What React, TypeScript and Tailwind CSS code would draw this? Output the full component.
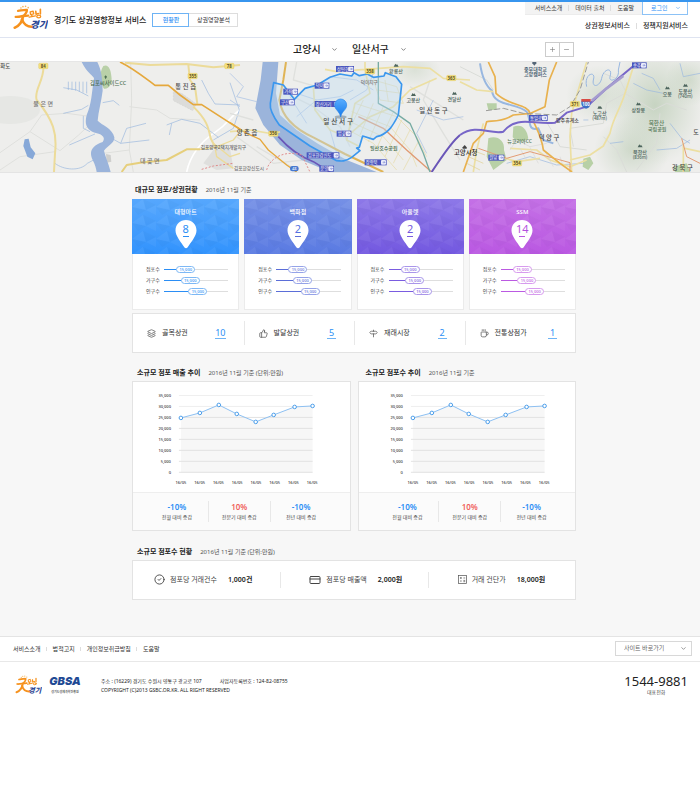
import type { ReactNode } from "react";
import { ChevronDown, CircleCheck, Coffee, CreditCard, Layers, Minus, Plus, Signpost, ThumbsUp } from "lucide-react";

const FONT = "font-['Noto_Sans','Noto_Sans_CJK_KR',sans-serif]";

type StoreTone = {
  name: string;
  count: number;
  head: string;
  num: string;
  line: string;
  pill: string;
};

const STORES: StoreTone[] = [
  { name: "대형마트", count: 8, head: "from-[#56a7fd] to-[#3193fd]", num: "text-[#2b8ef5]", line: "bg-[#2b8ef5]", pill: "border-[#7db8f5] text-[#2b8ef5]" },
  { name: "백화점", count: 2, head: "from-[#7590e6] to-[#5a7ae2]", num: "text-[#5472e0]", line: "bg-[#5b6ed8]", pill: "border-[#95a3e8] text-[#5b6ed8]" },
  { name: "아울렛", count: 2, head: "from-[#8d78e8] to-[#7358e0]", num: "text-[#7256dd]", line: "bg-[#7a5ce0]", pill: "border-[#a996ea] text-[#7a5ce0]" },
  { name: "SSM", count: 14, head: "from-[#c470e6] to-[#ba58e2]", num: "text-[#b352de]", line: "bg-[#bb5ae2]", pill: "border-[#d79bee] text-[#bb5ae2]" },
];

const MEASURES = [
  { label: "점포수", value: "15,000", at: 19 },
  { label: "가구수", value: "15,000", at: 26 },
  { label: "인구수", value: "15,000", at: 38 },
];

const POINTS = [
  [48, 37], [67, 32], [86, 24], [104, 33], [123, 41], [141, 34], [162, 26], [180, 25],
];
const TICKS = ["35,000", "30,000", "25,000", "20,000", "15,000", "10,000", "5,000", "0"];

function GyeonggiLogo({ className }: { className: string }) {
  return (
    <svg viewBox="38 16 106 76" className={className} role="img" aria-label="굿모닝 경기">
      <g fill="#f5b45a">
        <circle cx="62" cy="25" r="2.500" /><circle cx="68" cy="21" r="2.500" /><circle cx="76" cy="20" r="2.500" /><circle cx="84" cy="24" r="2.500" />
      </g>
      <g fill="none" stroke="#f6921e" strokeLinecap="round" strokeLinejoin="round">
        <path d="M53 34C62 33 72 30 80 31C81 37 76 43 71 48" strokeWidth="7" />
        <path d="M46 52C58 53 70 48 84 48" strokeWidth="7" />
        <path d="M68 50C68 65 56 81 43 85" strokeWidth="8" />
        <path d="M65 60C70 74 82 83 96 82" strokeWidth="8" />
        <path d="M90 37L91 45L101 43L99 35ZM95 45V51M87 53L106 49" strokeWidth="4" />
        <path d="M107 35L108 44L115 42M121 29L121 43" strokeWidth="5" />
        <ellipse cx="116" cy="51" rx="6" ry="4" strokeWidth="4" />
      </g>
      <text x="90" y="87" fontSize="28" fontWeight="900" fontStyle="italic" fill="#2b4796">경기</text>
    </svg>
  );
}

function Badge({ x, y, w, children }: { x: number; y: number; w: number; children: ReactNode }) {
  return (
    <g>
      <rect x={x} y={y} width={w} height="18" fill="#4a55bd" />
      <rect x={x + w - 17} y={y + 2} width="15" height="14" rx="3" fill="#e9ecfa" />
      <path d={`M${x + w - 12} ${y + 9}h7m-3 -3l3 3l-3 3`} stroke="#7883ce" strokeWidth="2" fill="none" />
      <text x={x + 3} y={y + 14} fontSize="13" fill="#fff">{children}</text>
    </g>
  );
}

function RoadNo({ x, y, children }: { x: number; y: number; children: ReactNode }) {
  return (
    <g>
      <rect x={x - 14} y={y - 8} width="28" height="16" rx="3" fill="#f5e07c" stroke="#d8bf52" />
      <text x={x} y={y + 5} textAnchor="middle" fontSize="13" fontWeight="700" fill="#5c5228">{children}</text>
    </g>
  );
}

function Peak({ x, y, children, h }: { x: number; y: number; children: ReactNode; h?: string }) {
  return (
    <g fill="#4d655d" textAnchor="middle" fontSize="15" fontWeight="500">
      <path d={`M${x - 7} ${y}l5 -9l3 4l2 -3l5 8z`} />
      <text x={x} y={y + 19}>{children}</text>
      {h && <text x={x} y={y + 34} fontSize="13">{h}</text>}
    </g>
  );
}

function RegionMap() {
  return (
    <svg viewBox="0 62 700 110" preserveAspectRatio="xMidYMid slice" className="block h-[110px] w-full bg-[#eeeeec]" role="img" aria-label="고양시 일산서구 지도">
      <defs>
        <radialGradient id="hill">
          <stop offset="0" stopColor="#c7d4c2" />
          <stop offset="1" stopColor="#c7d4c2" stopOpacity="0" />
        </radialGradient>
        <linearGradient id="marker" x1="0" y1="0" x2="0" y2="1">
          <stop offset="0" stopColor="#58adff" />
          <stop offset="1" stopColor="#1479ea" />
        </linearGradient>
      </defs>
      <rect width="700" height="200" fill="#eeeeec" />

      {/* eastern hills */}
      <ellipse cx="655" cy="105" rx="48" ry="60" fill="url(#hill)" />
      <ellipse cx="600" cy="95" rx="34" ry="30" fill="url(#hill)" opacity=".6" />
      <ellipse cx="632" cy="150" rx="38" ry="34" fill="url(#hill)" opacity=".8" />
      <ellipse cx="690" cy="80" rx="24" ry="26" fill="url(#hill)" opacity=".7" />
      <ellipse cx="10" cy="110" rx="30" ry="14" fill="#e6e7e4" />
      <ellipse cx="415" cy="70" rx="26" ry="18" fill="url(#hill)" opacity=".5" />

      {/* west */}
      <g transform="translate(0 60) scale(.33333)" fill="none" strokeLinejoin="round">
        <path d="M310 18C325 10 333 30 334 48C338 70 328 88 312 86C300 70 296 40 310 18Z" fill="#b9d0a8" />
        <path d="M520 95L545 100L590 132L578 152L520 122Z" fill="#dcdcda" stroke="#c8c8c6" strokeDasharray="5 4" />
        <path d="M640 270L690 265L700 325L650 330L610 310Z" fill="#dfdfdd" />
        <path d="M318 282L332 285L334 305L320 308Z" fill="#cfcfcd" />
        <g stroke="#fff" strokeWidth="5"><path d="M560 336C572 280 610 240 648 215S690 170 720 150" /></g>
        <g stroke="#dfe0dd" strokeWidth="3">
          <path d="M0 278L90 215L125 165L200 160L260 168M90 215L180 272L236 225L262 200" />
          <path d="M392 10L395 120L388 270L400 336M388 140L470 150L510 175L600 180M388 270L310 280" />
          <path d="M0 330L60 290L165 275" />
        </g>
        <g stroke="#98b6de" strokeWidth="2">
          <path d="M205 65V90M216 65V90M227 65V92M238 65V95M249 65V98M260 65V100M190 83L230 90L265 108" />
          <path d="M308 128L340 122L358 136M190 160L245 148L265 136M208 255L285 222M250 168V205L270 215" />
          <path d="M165 310C190 330 240 335 262 310L290 295M335 235L362 250L448 240M362 250L380 205L438 190" />
          <path d="M500 195L545 178L600 190L655 232M605 60L625 100L645 132L720 135M690 68L718 150L700 205L640 240M508 225L515 190" />
        </g>
        <path d="M74 238L86 236L92 262L106 280L98 298L82 290L70 258Z" fill="#86a8d8" />
        <path d="M245 6C262 40 275 42 282 54C275 100 275 130 260 165C252 195 262 210 285 218C306 222 318 232 308 246C275 258 266 275 278 300C286 315 288 325 290 336H332C326 310 316 290 312 272C322 258 345 248 343 232C338 205 305 195 293 182C295 155 304 125 308 92C306 50 305 32 292 6Z" fill="#9bb4db" />
        <g stroke="#ecdb99" strokeWidth="6">
          <path d="M130 15C135 60 100 90 110 120C160 180 172 220 165 280L162 336" />
          <path d="M375 8L450 15L560 12L640 22L720 15M565 15L570 60L585 80L592 132M580 140C620 180 625 200 632 235L645 260" />
          <path d="M365 336L380 315L420 308L500 300L560 268L600 268" stroke="#e6cf7c" />
        </g>
        <g stroke="#ecdb99" strokeWidth="4">
          <path d="M600 268L645 262L700 240L720 215M645 262L650 290L700 325M640 250L690 290L720 280" />
        </g>
        <path d="M360 6C400 25 430 50 465 76H505L540 105L580 134H605L720 208" stroke="#e5a83c" strokeWidth="5" />
        <path d="M605 328L640 318L700 310" stroke="#df8888" strokeWidth="3" strokeDasharray="6 5" />
        <RoadNo x={130} y={18}>84</RoadNo>
        <RoadNo x={688} y={18}>78</RoadNo>
        <RoadNo x={578} y={48}>355</RoadNo>
        <g stroke="none" fill="#4a4a4a" fontWeight="500">
          <text x="1" y="23" fontSize="16">화도</text>
          <text x="270" y="75" fontSize="16" fill="#4d7052">김포씨사이드CC</text>
          <path d="M313 50l4 -4l4 4l-4 8z" fill="#4d7052" />
          <text x="100" y="138" fontSize="18" fill="#777">불 은 면</text>
          <text x="526" y="87" fontSize="19">통 진 읍</text>
          <text x="420" y="308" fontSize="18" fill="#777">대 곶 면</text>
          <text x="602" y="267" fontSize="14" fill="#666">김포양곡2택지개발지구</text>
        </g>
      </g>

      {/* centre */}
      <g transform="translate(230 60) scale(.33333)" fill="none" strokeLinejoin="round">
        <g stroke="#dfe0dd" strokeWidth="4">
          <path d="M200 6L190 60L260 80M540 80L620 130L700 180M0 160L70 180M170 100L250 140L330 200L360 260" />
          <path d="M600 60L580 120L640 220L690 300M80 260L200 330M20 230L130 310L220 300" />
        </g>
        <g stroke="#a3bde2" strokeWidth="2">
          <path d="M0 40L40 80L20 110L80 125M170 90L260 120L330 110L370 90M360 120L410 90L430 40M560 150L640 180L700 170M300 50L380 60L430 90" />
          <path d="M200 170L260 120M230 190L180 110M590 280L560 220L610 120M0 120L30 140M300 210L320 280" />
        </g>
        <path d="M98 6L92 60L76 145L100 195L150 255L215 300L300 336H440L350 300L265 252L200 210L150 165L138 100L145 6Z" fill="#9bb4db" />
        <path d="M168 6L160 60L148 120C155 165 190 205 250 232L345 282L460 336" stroke="#e0b456" strokeWidth="6" />
        <path d="M0 188L50 220L90 238L115 270L170 315L200 336" stroke="#e5a83c" strokeWidth="4" />
        <path d="M145 230C180 270 210 290 250 305L300 336" stroke="#6a56b8" strokeWidth="5" />
        <g stroke="#ecdfa2" strokeWidth="5">
          <path d="M285 28L320 35L405 28L520 20L600 25L640 55L720 60M405 6V28L420 100L375 130L350 240L390 260" />
          <path d="M0 215L60 210L130 222L150 215M250 80L255 150L300 210L350 230L420 170L490 140L540 90L620 55" />
        </g>
        <g stroke="#e6daa4" strokeWidth="2">
          <path d="M375 130L500 170L560 230L590 290M365 155L480 200L540 270L560 320M360 185L460 230L520 300M355 210L430 250L500 330" />
          <path d="M400 120L355 215M430 130L390 225M460 140L415 245M490 155L440 265M515 180L465 290M540 210L490 310M565 245L520 330" />
          <path d="M430 60L500 80L520 130L450 120ZM440 90L515 100M465 60L475 125" />
        </g>
        <path d="M385 170L460 205L530 270L605 336" stroke="#e09a72" strokeWidth="4" />
        <path d="M445 6V130L490 155L540 190L580 280L600 336" stroke="#76aba2" strokeWidth="4" />
        <path d="M605 336C630 300 660 250 690 225" stroke="#6a56b8" strokeWidth="6" />
        <path d="M110 330C120 290 170 270 215 285L240 336" stroke="#e08f8f" strokeWidth="3" strokeDasharray="6 5" />
        <path d="M131 68L160 75L193 118L225 85L262 75L300 52L330 42L365 48L372 38L388 47L412 42L430 52L462 48L466 38L498 50L515 73L505 165C490 195 475 222 440 230L430 238L398 228L388 262L380 264L390 272L365 292C345 305 335 304 320 302L240 258L148 195C130 170 118 150 121 130Z" fill="#bfdcf3" fillOpacity=".4" stroke="#3b97ee" strokeWidth="5" />
        <Badge x={318} y={18} w={54}>상탄현</Badge>
        <Badge x={254} y={68} w={44}>덕이</Badge>
        <Badge x={160} y={86} w={44}>가좌</Badge>
        <Badge x={150} y={118} w={44}>구산</Badge>
        <Badge x={254} y={123} w={76}>장산거리</Badge>
        <Badge x={320} y={212} w={44}>법곶</Badge>
        <Badge x={230} y={277} w={98}>김포한강신도</Badge>
        <Badge x={404} y={298} w={66}>장항북</Badge>
        <Badge x={268} y={317} w={44}>운양</Badge>
        <RoadNo x={420} y={34}>358</RoadNo>
        <RoadNo x={664} y={54}>363</RoadNo>
        <RoadNo x={130} y={221}>356</RoadNo>
        <rect x="180" y="318" width="26" height="16" rx="7" fill="#4779cf" />
        <text x="193" y="331" textAnchor="middle" fontSize="12" fill="#fff">48</text>
        <g stroke="none">
          <Peak x={498} y={20}>황룡산</Peak>
          <Peak x={550} y={108}>고봉산</Peak>
          <Peak x={673} y={104}>견달산</Peak>
          <g fill="#444" fontWeight="500">
            <text x="392" y="72" fontSize="14" fill="#777">덕이지구</text>
            <text x="280" y="193" fontSize="20">일 산 서 구</text>
            <text x="568" y="160" fontSize="19">일 산 동 구</text>
            <text x="20" y="224" fontSize="19">양 촌 읍</text>
            <text x="420" y="270" fontSize="15" fill="#456d50">일산호수공원</text>
            <text x="12" y="331" fontSize="14" fill="#777">김포한강신도시</text>
          </g>
        </g>
        <ellipse cx="332" cy="171" rx="18" ry="5" fill="#345" opacity=".35" />
        <path d="M332 171C328 152 314 150 314 135A18 18 0 0 1 350 135C350 150 336 152 332 171Z" fill="url(#marker)" stroke="#2783e8" strokeWidth="2" />
      </g>

      {/* east */}
      <g transform="translate(460 60) scale(.33333)" fill="none" strokeLinejoin="round">
        <g fill="#b8d0a6">
          <path d="M85 235C110 225 135 240 132 270L140 300L100 330L80 290Z" />
          <path d="M160 200C185 190 200 205 205 235C190 250 170 245 158 232Z" />
          <path d="M80 130H110V150H85ZM370 296L390 290L400 310L385 330L368 320Z" />
          <path d="M640 320L680 310L690 336H645Z" />
        </g>
        <g stroke="#dadcd8" strokeWidth="3">
          <path d="M500 100L480 60L430 40M495 100L440 130L430 190L330 205M495 100L580 150L620 130L680 150M600 160L590 250L530 330" />
          <path d="M430 230L470 270L500 336M0 20L80 60L100 90M250 170L280 220L300 260L380 270M330 205L340 260" />
        </g>
        <g stroke="#98b7e0" strokeWidth="2">
          <path d="M60 10C66 50 80 80 96 92C100 140 170 128 200 155C215 180 200 215 235 205L250 240L280 250" strokeWidth="6" />
          <path d="M380 80C370 40 410 30 400 60C395 85 420 80 425 55C430 25 460 20 450 50C445 70 480 60 475 30L480 6" strokeWidth="3" />
          <path d="M545 40L580 55L600 90M660 10L670 50L720 40M590 270L650 265L690 240M630 190L665 235L690 250M520 70L560 90L610 100" />
          <path d="M140 310L210 290L290 315L370 310M450 250L490 245M370 180H385" />
        </g>
        <g stroke="#ecdfa2" strokeWidth="5">
          <path d="M380 6L355 90L335 160L330 230L335 336M0 65L50 90L100 95M520 20L495 100C480 150 460 170 450 220L430 258L390 285L330 300" />
          <path d="M150 265L230 270L270 300L330 320L380 300M120 290L170 305L240 295M40 336L50 270L70 190M670 250V336M675 265L720 275" />
        </g>
        <g stroke="#d8d8d6" strokeWidth="2">
          <path d="M150 270L170 240L210 260L260 250M180 265L200 300M210 262L235 310M250 265L280 320M300 290L310 320" />
          <path d="M20 310L60 330M25 290L70 310M35 270L75 285" stroke="#dfcf8f" />
        </g>
        <path d="M55 265L140 295L210 275L330 308V336" stroke="#e39c74" strokeWidth="3" />
        <path d="M665 235L680 290L720 310" stroke="#e39c74" strokeWidth="3" />
        <path d="M85 6L105 50L108 100C150 140 200 130 210 160C225 200 245 225 250 270L300 310L336 336M290 6L268 60L255 140L212 160L160 165C120 190 90 180 80 185L70 220L40 250L10 336" stroke="#e8b14e" strokeWidth="5" />
        <path d="M78 152L130 145L190 160L290 165L330 140L360 90L385 6" stroke="#9a9a98" strokeWidth="3" strokeDasharray="18 7" />
        <path d="M0 225C50 190 90 225 130 215C170 165 220 195 285 188L320 158L380 140L440 85L530 10" stroke="#7766c8" strokeWidth="6" />
        <path d="M395 122L440 85L490 48" stroke="#a59ccf" strokeWidth="8" />
        <Badge x={516} y={7} w={44}>송추</Badge>
        <Badge x={207} y={165} w={56}>통일로</Badge>
        <Badge x={85} y={284} w={48}>원당</Badge>
        <RoadNo x={345} y={132}>371</RoadNo>
        <RoadNo x={171} y={310}>354</RoadNo>
        <path d="M364 122H392V132C390 142 384 145 378 146C370 144 366 140 364 132Z" fill="#3c6fc7" />
        <rect x="364" y="117" width="28" height="8" fill="#d84b45" />
        <text x="378" y="139" textAnchor="middle" fontSize="13" fontWeight="700" fill="#fff">100</text>
        <g stroke="none">
          <Peak x={419} y={146} h="(487m)">노고산</Peak>
          <Peak x={535} y={136}>상장봉</Peak>
          <Peak x={622} y={88}>오봉</Peak>
          <Peak x={676} y={80} h="(740m)">도봉산</Peak>
          <Peak x={540} y={262} h="(836m)">북한산</Peak>
          <g fill="#444" fontSize="15" fontWeight="500">
            <path d="M217 6h12v4l-6 7l-6 -7z" fill="#567" />
            <text x="192" y="32" fill="#3a5268">중부대학교</text>
            <text x="192" y="48" fill="#3a5268">고양캠퍼스</text>
            <text x="288" y="185">양주휴게소</text>
            <text x="142" y="249" fill="#567a5a">뉴코리아CC</text>
            <text x="236" y="240" fontSize="19">덕 양 구</text>
            <text x="566" y="196" fontSize="17" fill="#567a5a">북한산</text>
            <text x="564" y="213" fill="#567a5a">국립공원</text>
            <text x="636" y="330" fontSize="19">강 북 구</text>
            <text x="700" y="223" fontSize="18">도</text>
            <path d="M8 262l6 -7l6 7v4h-12z" fill="#444" />
            <text x="-18" y="284" fontSize="19" fill="#222">고양시청</text>
          </g>
        </g>
      </g>
    </svg>
  );
}

function SectionTitle({ title, note }: { title: string; note: string }) {
  return (
    <div className="flex items-center gap-2 leading-3">
      <h2 className="text-[7px] font-bold text-[#222]">{title}</h2>
      <span className="text-[6px] text-[#555]">{note}</span>
    </div>
  );
}

function StoreCard({ store, index }: { store: StoreTone; index: number }) {
  const patternId = `facets-${index}`;
  return (
    <article className="border border-[#ebebeb] bg-white">
      <div className={`relative -mx-px -mt-px flex h-[55px] flex-col items-center bg-linear-to-b pt-2 ${store.head}`}>
        <svg className="absolute inset-0 h-full w-full" aria-hidden="true">
          <defs>
            <pattern id={patternId} width="24" height="16" patternUnits="userSpaceOnUse">
              <path d="M0 8L11 0L14 11Z" fill="#fff" opacity=".05" />
              <path d="M11 0L24 6L14 11Z" fill="#000" opacity=".02" />
              <path d="M0 8L14 11L6 16Z" fill="#000" opacity=".02" />
              <path d="M14 11L24 6L24 16Z" fill="#fff" opacity=".04" />
            </pattern>
          </defs>
          <rect width="100%" height="100%" fill={`url(#${patternId})`} />
        </svg>
        <h3 className="relative text-[6px] leading-[11px] font-medium text-white">{store.name}</h3>
        <div className="relative mt-0.5 h-[29px] w-[22px]">
          <svg viewBox="0 0 22 29" className="absolute inset-0 h-full w-full" aria-hidden="true">
            <path d="M11 0C17 0 21.500 4.500 21.500 10.500C21.500 16 16 22 12.500 27.500Q11 29 9.500 27.500C6 22 0.500 16 0.500 10.500C0.500 4.500 5 0 11 0Z" fill="#fff" />
          </svg>
          <a href="#" className={`relative flex flex-col items-center gap-px pt-[3px] text-[11px] leading-3 ${store.num}`}>
            {store.count}
            <span className={`h-px w-1.5 ${store.line}`} />
          </a>
        </div>
      </div>
      <dl className="pt-[10px] pr-[10px] pb-[12px] pl-[13px]">
        {MEASURES.map((m) => (
          <div key={m.label} className="flex h-[11px] items-center">
            <dt className="w-[18px] shrink-0 text-[5px] leading-[11px] whitespace-nowrap text-[#444]">{m.label}</dt>
            <dd className="relative flex h-[11px] flex-1 items-center">
              <span className="h-px w-full bg-[#dedede]" />
              <span className={`absolute left-0 h-px ${store.line}`} style={{ width: `${m.at}%` }} />
              <span
                className={`absolute flex h-[7px] w-[19px] items-center justify-center rounded-full border bg-white text-[4px] leading-[5px] font-medium ${store.pill}`}
                style={{ left: `${m.at}%` }}
              >
                {m.value}
              </span>
            </dd>
          </div>
        ))}
      </dl>
    </article>
  );
}

const MARKETS = [
  { label: "골목상권", count: 10, icon: Layers },
  { label: "발달상권", count: 5, icon: ThumbsUp },
  { label: "재래시장", count: 2, icon: Signpost },
  { label: "전통상점가", count: 1, icon: Coffee },
];

function TrendChart({ shift }: { shift: number }) {
  const line = POINTS.map(([x, y]) => `${x} ${y}`).join("L");
  return (
    <svg viewBox="0 1 217 110" className="block w-full" role="img" aria-label="월별 추이">
      <g transform={`translate(${shift} 0)`}>
        <path d={`M${line}V92H48Z`} fill="#f7f7f7" />
        {TICKS.map((t, i) => (
          <g key={t}>
            <rect x="46" y={14 + i * 11} width="134" height="1" fill={i < 2 ? "#efefef" : "#e2e2e2"} />
            <text x="38" y={16 + i * 11} textAnchor="end" fontSize="4" fontWeight="500" fill="#333">{t}</text>
          </g>
        ))}
        <path d={`M${line}`} fill="none" stroke="#8dc0f2" />
        {POINTS.map(([x, y], i) => (
          <g key={x}>
            <circle cx={x} cy={y} r="1.800" fill="#fff" stroke="#4a9de9" />
            <text x={48 + i * 18.800} y="103" textAnchor="middle" fontSize="4" fontWeight="500" fill="#333">16/05</text>
          </g>
        ))}
      </g>
    </svg>
  );
}

const CHANGES = [
  { value: "-10%", label: "전월 대비 증감", tone: "text-[#2b8ef5]" },
  { value: "10%", label: "전분기 대비 증감", tone: "text-[#f0605a]" },
  { value: "-10%", label: "전년 대비 증감", tone: "text-[#2b8ef5]" },
];

function TrendPanel({ shift, pad }: { shift: number; pad: string }) {
  return (
    <div className="border border-[#e3e3e3] bg-white">
      <TrendChart shift={shift} />
      <div className={`grid h-[38px] grid-cols-3 items-center border-t border-[#eee] bg-[#fbfbfb] ${pad}`}>
        {CHANGES.map((c, i) => (
          <div key={c.label} className={`flex h-[21px] flex-col items-center justify-center ${i ? "border-l border-[#e8e8e8]" : ""}`}>
            <strong className={`text-[8px] leading-[11px] font-semibold ${c.tone}`}>{c.value}</strong>
            <span className="text-[5px] leading-[10px] whitespace-nowrap text-[#444]">{c.label}</span>
          </div>
        ))}
      </div>
    </div>
  );
}

function CalcIcon() {
  return (
    <svg viewBox="0 0 10 10" className="h-[9px] w-[9px]" fill="none" stroke="#555" strokeWidth=".8" aria-hidden="true">
      <rect x=".5" y=".5" width="9" height="9" />
      <path d="M2.200 3.300h2M3.200 2.300v2M6 3.300h2M2.200 6.700h2M6 6h2M6 7.400h2" />
    </svg>
  );
}

function FooterLinks() {
  return (
    <nav className="flex items-center text-[6px] leading-3 text-[#333]">
      {["서비스소개", "법적고지", "개인정보취급방침", "도움말"].map((t, i) => (
        <a key={t} href="#" className={i ? "ml-[5px] flex items-center gap-1.5" : ""}>
          {i > 0 && <span className="h-1 w-px bg-[#ddd]" />}
          {t}
        </a>
      ))}
    </nav>
  );
}

function RegionSelect({ label, value, width }: { label: string; value: string; width: string }) {
  return (
    <div className={`relative ${width}`}>
      <select aria-label={label} className="block h-[23px] w-full appearance-none bg-transparent text-[10px] font-medium text-[#222]">
        <option>{value}</option>
      </select>
      <ChevronDown className="pointer-events-none absolute top-2 right-0 h-[7px] w-[7px] text-[#333]" />
    </div>
  );
}

export default function App() {
  return (
    <div className={`bg-white text-[#333] ${FONT}`}>
      <header>
        <div className="flex h-[38px] justify-between border-t-2 border-b border-t-[#3795ee] border-b-[#dfe4f1] pr-3 pl-[13px]">
          <div className="flex items-center">
            <a href="#" className="block pb-1"><GyeonggiLogo className="block h-[25px] w-[35px]" /></a>
            <h1 className="ml-1.5 text-[8px] leading-4 font-medium whitespace-nowrap text-[#222]">경기도 상권영향정보 서비스</h1>
            <div className="ml-1.5 flex">
              <button className="h-[14px] w-[37px] border border-[#6db3f5] text-[6px] leading-3 font-medium text-[#2b8ef5]">현황판</button>
              <button className="h-[14px] w-[49px] border border-l-0 border-[#ddd] text-[6px] leading-3 text-[#333]">상권영향분석</button>
            </div>
          </div>
          <div className="flex flex-col items-end">
            <div className="flex h-[13px]">
              <nav className="flex items-center border-b border-[#ececec] bg-[#f3f3f3] pr-2 pl-[10px] text-[6px] leading-3 text-[#333]">
                <a href="#">서비스소개</a>
                <span className="mx-1.5 h-1.5 w-px bg-[#ddd]" />
                <a href="#">데이터 출처</a>
                <span className="mx-1.5 h-1.5 w-px bg-[#ddd]" />
                <a href="#">도움말</a>
              </nav>
              <button className="flex w-[46px] items-center justify-between border border-t-0 border-[#8cc2f6] pr-1.5 pl-2 text-[6px] leading-3 text-[#2b8ef5]">
                로그인
                <ChevronDown className="h-1.5 w-1.5" />
              </button>
            </div>
            <nav className="flex flex-1 items-center text-[7px] leading-3 font-medium text-[#222]">
              <a href="#">상권정보서비스</a>
              <span className="mx-1.5 h-1.5 w-px bg-[#ddd]" />
              <a href="#">정책지원서비스</a>
            </nav>
          </div>
        </div>
        <div className="border-b border-[#e6e6e6]">
          <div className="mx-auto grid h-[23px] max-w-[448px] grid-cols-[1fr_auto_1fr] items-center">
            <div className="col-start-2 flex gap-[14px]">
              <RegionSelect label="시" value="고양시" width="w-[45px]" />
              <RegionSelect label="구" value="일산서구" width="w-[55px]" />
            </div>
            <div className="flex justify-end text-[#777]">
              <button aria-label="확대" className="flex h-[15px] w-[15px] items-center justify-center border border-[#ccc]"><Plus className="h-[7px] w-[7px]" /></button>
              <button aria-label="축소" className="-ml-px flex h-[15px] w-[15px] items-center justify-center border border-[#ccc]"><Minus className="h-[7px] w-[7px]" /></button>
            </div>
          </div>
        </div>
        <RegionMap />
      </header>

      <main className="flex justify-center border-t border-b border-[#e4e4e4] bg-[#f7f7f7] pt-[11px] pb-9 pl-2">
        <div className="w-full max-w-[444px]">
          <section>
            <div className="pl-[3px]"><SectionTitle title="대규모 점포/상권현황" note="2016년 11월 기준" /></div>
            <div className="mt-[3px] grid grid-cols-4 gap-[5px]">
              {STORES.map((s, i) => <StoreCard key={s.name} store={s} index={i} />)}
            </div>
            <ul className="mt-[3px] grid h-10 grid-cols-4 items-center border border-[#e3e3e3] bg-white">
              {MARKETS.map(({ label, count, icon: Icon }, i) => (
                <li key={label} className={`flex h-6 items-center pr-[18px] pl-[14px] ${i ? "border-l border-[#e8e8e8]" : ""}`}>
                  <Icon className="h-[9px] w-[9px] text-[#555]" strokeWidth={2} />
                  <span className="ml-1.5 text-[7px] leading-3 whitespace-nowrap text-[#333]">{label}</span>
                  <a href="#" className="ml-auto flex min-w-[9px] justify-center border-b border-[#6db3f5] text-[9px] leading-[11px] text-[#2b8ef5]">{count}</a>
                </li>
              ))}
            </ul>
          </section>

          <div className="mt-[14px] grid grid-cols-2 gap-[7px]">
            <section>
              <div className="pl-[5px]"><SectionTitle title="소규모 점포 매출 추이" note="2016년 11월 기준 (단위:만원)" /></div>
              <div className="mt-[2px]"><TrendPanel shift={0} pad="pl-[13px] pr-[18px]" /></div>
            </section>
            <section>
              <div className="pl-[8px]"><SectionTitle title="소규모 점포수 추이" note="2016년 11월 기준" /></div>
              <div className="mt-[2px]"><TrendPanel shift={6} pad="pl-[18px] pr-[13px]" /></div>
            </section>
          </div>

          <section className="mt-[15px]">
            <div className="pl-[5px]"><SectionTitle title="소규모 점포수 현황" note="2016년 11월 기준 (단위:만원)" /></div>
            <ul className="mt-[2px] grid h-10 grid-cols-3 items-center border border-[#e3e3e3] bg-white text-[7px] leading-3">
              <li className="flex h-4 items-center pl-[21px]">
                <CircleCheck className="h-[11px] w-[11px] text-[#444]" strokeWidth={2} />
                <span className="ml-[5px] text-[#444]">점포당 거래건수</span>
                <strong className="ml-[11px] font-semibold text-[#222]">1,000건</strong>
              </li>
              <li className="flex h-4 items-center border-l border-[#e8e8e8] pl-[28px]">
                <CreditCard className="h-3 w-3 text-[#444]" strokeWidth={2} />
                <span className="ml-[5px] text-[#444]">점포당 매출액</span>
                <strong className="ml-[11px] font-semibold text-[#222]">2,000원</strong>
              </li>
              <li className="flex h-4 items-center border-l border-[#e8e8e8] pl-[29px]">
                <CalcIcon />
                <span className="ml-[5px] text-[#444]">거래 건단가</span>
                <strong className="ml-[11px] font-semibold text-[#222]">18,000원</strong>
              </li>
            </ul>
          </section>
        </div>
      </main>

      <footer>
        <div className="flex h-[25px] items-center justify-between border-b border-[#e8e8e8] pr-2 pl-[13px]">
          <FooterLinks />
          <div className="relative">
            <select aria-label="사이트 바로가기" className="block h-[15px] w-[77px] appearance-none border border-[#d8d8d8] bg-white pl-2 text-[6px] text-[#666]">
              <option>사이트 바로가기</option>
            </select>
            <ChevronDown className="pointer-events-none absolute top-1 right-[5px] h-[7px] w-[7px] text-[#555]" />
          </div>
        </div>
        <div className="flex items-start pt-3 pr-3 pb-6 pl-[15px]">
          <GyeonggiLogo className="mt-px h-[19px] w-[27px]" />
          <div className="ml-[6px] flex w-[34px] flex-col items-center gap-0.5 whitespace-nowrap">
            <span className="font-['Inter','Liberation_Sans',sans-serif] text-[11px] leading-[14px] font-black text-[#1f4a94] italic">GBSA</span>
            <span className="text-[3px] leading-[4px] font-medium text-[#333]">경기도경제과학진흥원</span>
          </div>
          <div className="ml-[19px] pt-[3px] text-[5px] leading-[9px] text-[#222]">
            <p className="flex gap-[18px]">
              <span>주소 : (16229) 경기도 수원시 영통구 광교로 107</span>
              <span>사업자등록번호 : 124-82-08755</span>
            </p>
            <p>COPYRIGHT (C)2013 GSBC.OR.KR. ALL RIGHT RESERVED</p>
          </div>
          <div className="ml-auto flex flex-col items-center">
            <strong className="text-[13px] leading-[14px] font-normal text-[#222]">1544-9881</strong>
            <span className="text-[5px] leading-[9px] text-[#444]">대표전화</span>
          </div>
        </div>
      </footer>
    </div>
  );
}
